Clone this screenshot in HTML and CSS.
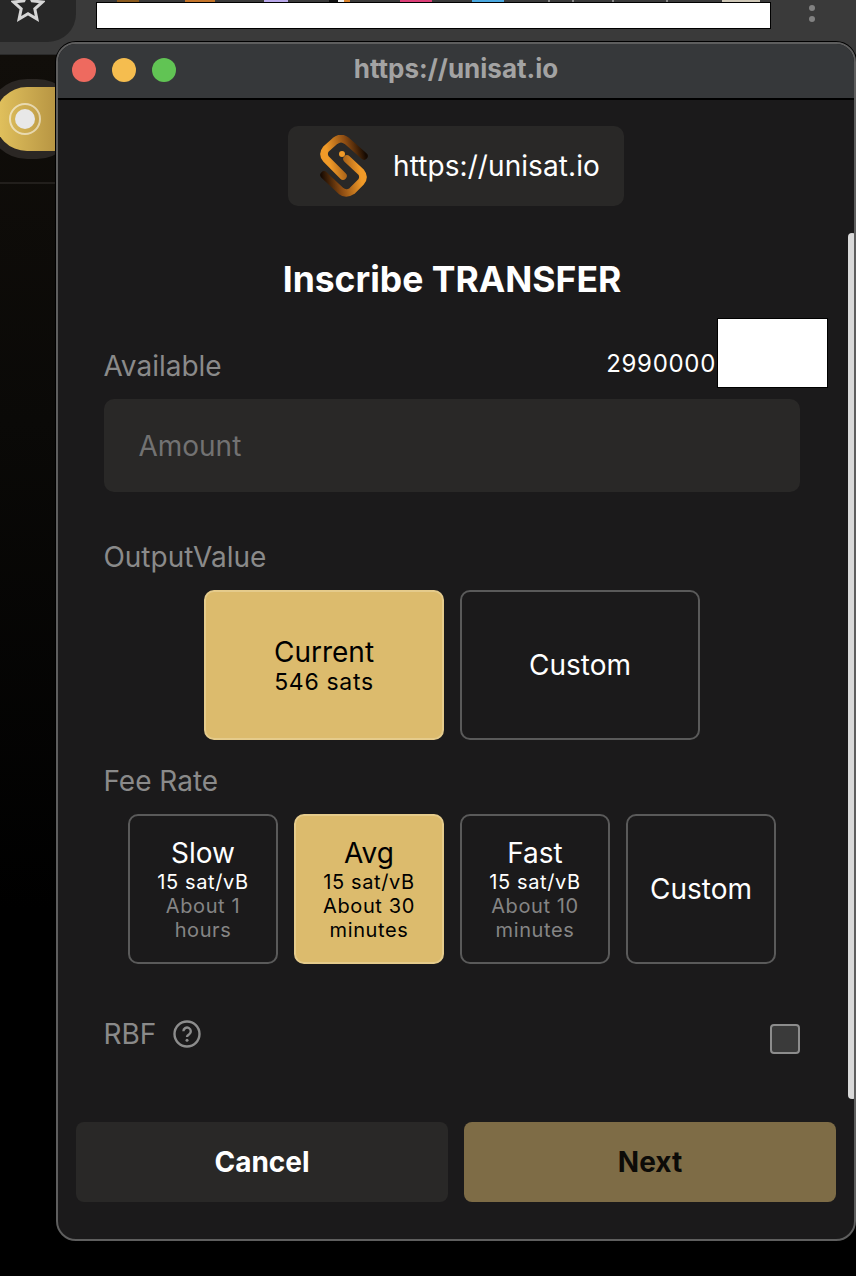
FILE: index.html
```html
<!DOCTYPE html>
<html lang="en">
<head>
<meta charset="utf-8">
<title>Inscribe TRANSFER</title>
<link rel="stylesheet" href="styles.css">
</head>
<body>
<div class="desktop">
  <div class="toolbar">
    <div class="star-pill">
      <svg class="star" width="34" height="34" viewBox="0 0 34 34"><path d="M17 2.5l4.2 9.4 10.2 1.1-7.6 6.9 2.1 10.1-8.9-5.2-8.9 5.2 2.1-10.1-7.6-6.9 10.2-1.1z" fill="none" stroke="#d6d6d6" stroke-width="3" stroke-linejoin="miter"/></svg>
    </div>
    <div class="thumbs">
      <span class="thumb t1"></span><span class="thumb t2"></span><span class="thumb t3"></span><span class="thumb t4"></span><span class="thumb t5"></span><span class="thumb t6"></span><span class="thumb t7a"></span><span class="thumb t7b"></span><span class="thumb t7c"></span><span class="thumb t7d"></span><span class="thumb t8"></span>
    </div>
    <div class="redact-bar"></div>
    <div class="kebab"><span></span><span></span></div>
  </div>
  <div class="behind">
    <div class="toggle"><div class="toggle-gold"><div class="toggle-ring"><div class="toggle-dot"></div></div></div></div>
    <div class="behind-line"></div>
  </div>

  <div class="window">
    <div class="titlebar">
      <div class="lights"><span class="light red"></span><span class="light yellow"></span><span class="light green"></span></div>
      <div class="window-title">https://unisat.io</div>
    </div>
    <div class="content">
      <div class="origin">
        <svg class="logo" width="48" height="62" viewBox="0 0 48 62">
          <defs>
            <linearGradient id="la" x1="46" y1="22" x2="10" y2="30" gradientUnits="userSpaceOnUse"><stop offset="0" stop-color="#160a02"/><stop offset=".45" stop-color="#8a4a12"/><stop offset="1" stop-color="#f09a28"/></linearGradient>
            <linearGradient id="lb" x1="1" y1="40" x2="40" y2="34" gradientUnits="userSpaceOnUse"><stop offset="0" stop-color="#160a02"/><stop offset=".45" stop-color="#8a4a12"/><stop offset="1" stop-color="#f09a28"/></linearGradient>
          </defs>
          <path d="M44 21 L27 6 Q21 1 15 6 L6 14 Q2 19 6 24 L23 41" fill="none" stroke="url(#la)" stroke-width="7.5" stroke-linecap="round"/>
          <path d="M4 40 L21 56 Q26 60 32 56 L41 47 Q45 42 41 37 L27 24" fill="none" stroke="url(#lb)" stroke-width="7.5" stroke-linecap="round"/>
          <circle cx="22" cy="19" r="3" fill="#f09a28"/>
        </svg>
        <span class="origin-text">https://unisat.io</span>
      </div>
      <h1 class="heading">Inscribe TRANSFER</h1>
      <div class="available-row">
        <span class="label">Available</span>
        <div class="balance"><span class="balance-num">2990000</span><div class="redact-box"></div></div>
      </div>
      <div class="amount-input">Amount</div>
      <div class="label output-label">OutputValue</div>
      <div class="output-row">
        <div class="card card-wide selected"><div class="card-title">Current</div><div class="card-sub">546 sats</div></div>
        <div class="card card-wide"><div class="card-title">Custom</div></div>
      </div>
      <div class="label fee-label">Fee Rate</div>
      <div class="fee-row">
        <div class="card card-fee"><div class="card-title">Slow</div><div class="card-sub">15 sat/vB</div><div class="card-note">About 1 hours</div></div>
        <div class="card card-fee selected"><div class="card-title">Avg</div><div class="card-sub">15 sat/vB</div><div class="card-note">About 30 minutes</div></div>
        <div class="card card-fee"><div class="card-title">Fast</div><div class="card-sub">15 sat/vB</div><div class="card-note">About 10 minutes</div></div>
        <div class="card card-fee"><div class="card-title">Custom</div></div>
      </div>
      <div class="rbf-row">
        <div class="rbf-left">
          <span class="label">RBF</span>
          <svg class="help" width="28" height="28" viewBox="0 0 28 28"><circle cx="14" cy="14" r="12.5" fill="none" stroke="#8c8c8c" stroke-width="2.4"/><path d="M10.4 11.3a3.7 3.7 0 1 1 5.8 3c-1.4.9-2.2 1.5-2.2 2.8" fill="none" stroke="#8c8c8c" stroke-width="2.4"/><circle cx="14" cy="20.3" r="1.5" fill="#8c8c8c"/></svg>
        </div>
        <div class="checkbox"></div>
      </div>
    </div>
    <div class="footer">
      <div class="btn btn-cancel">Cancel</div>
      <div class="btn btn-next">Next</div>
    </div>
    <div class="scrollbar"></div>
  </div>
</div>
</body>
</html>
```

FILE: styles.css
```css
* { box-sizing: border-box; }
html, body { margin: 0; padding: 0; }
body { width: 856px; height: 1276px; overflow: hidden; background: #000; font-family: Inter, "Liberation Sans", sans-serif; }
.desktop { position: relative; width: 856px; height: 1276px; overflow: hidden; background: #000; }

.toolbar { position: relative; height: 55px; background: #3a3a3a; border-bottom: 1px solid #2a2a2a; }
.star-pill { position: absolute; left: 0; top: 0; width: 76px; height: 42px; background: #272727; border-radius: 0 0 28px 0; }
.star { position: absolute; left: 11px; top: -11px; }
.thumbs { position: absolute; left: 96px; top: 0; width: 675px; height: 3px; }
.thumb { position: absolute; top: 0; height: 3px; }
.t1 { left: 21px; width: 22px; background: #8a5a1e; }
.t2 { left: 89px; width: 30px; background: #c4742a; }
.t3 { left: 168px; width: 24px; background: #b9a8ea; }
.t4 { left: 233px; width: 21px; background: linear-gradient(90deg, #111 45%, #eee 45%, #eee 70%, #d9822b 70%); }
.t5 { left: 304px; width: 32px; background: #dd3f78; }
.t6 { left: 376px; width: 32px; background: #4aa8e0; }
.t7a { left: 452px; width: 2px; background: #8a8a8a; }
.t7b { left: 476px; width: 2px; background: #8a8a8a; }
.t7c { left: 516px; width: 2px; background: #8a8a8a; }
.t7d { left: 570px; width: 2px; background: #8a8a8a; }
.t8 { left: 626px; width: 38px; background: #cfc8b8; }
.redact-bar { position: absolute; left: 96px; top: 2px; width: 675px; height: 27px; background: #fff; border: 1px solid #000; }
.kebab { position: absolute; left: 809px; top: 5px; display: flex; flex-direction: column; gap: 5px; }
.kebab span { display: block; width: 6px; height: 6px; border-radius: 50%; background: #828282; }

.behind { position: absolute; left: 0; top: 55px; width: 60px; height: 1221px; background: linear-gradient(180deg, #110e0a 0, #0a0907 30%, #000 70%); }
.toggle { position: absolute; left: -13px; top: 24px; width: 90px; height: 80px; border-radius: 40px; background: #2b2724; padding: 8px 0 8px 8px; }
.toggle-gold { width: 82px; height: 64px; border-radius: 32px 0 0 32px; background: linear-gradient(90deg, #e3c35e, #a8853a); display: flex; align-items: center; padding-left: 14px; }
.toggle-ring { width: 32px; height: 32px; border-radius: 50%; border: 2px solid rgba(255,255,255,.55); display: flex; align-items: center; justify-content: center; }
.toggle-dot { width: 20px; height: 20px; border-radius: 50%; background: #e8e8e8; }
.behind-line { position: absolute; left: 0; top: 127px; width: 60px; height: 2px; background: #221f1c; }

.window { position: absolute; left: 56px; top: 42px; width: 800px; height: 1199px; border-radius: 20px; background: #1b1a1b; border: 2px solid #5e5e5e; box-shadow: 0 0 0 1px #000; overflow: hidden; display: flex; flex-direction: column; }
.titlebar { position: relative; flex: none; height: 56px; padding-bottom: 5px; background: #36383a; border-bottom: 2px solid #000; display: flex; align-items: center; justify-content: center; }
.lights { position: absolute; left: 14px; top: 14px; display: flex; gap: 16px; }
.light { display: block; width: 24px; height: 24px; border-radius: 50%; }
.red { background: #ee6a5f; }
.yellow { background: #f5bd4f; }
.green { background: #61c454; }
.window-title { font-size: 26px; font-weight: 700; color: #a3a3a3; }

.content { flex: none; height: 1022px; padding: 26px 54px 0 46px; display: flex; flex-direction: column; }
.origin { align-self: center; width: 336px; height: 80px; border-radius: 10px; background: #292827; display: flex; align-items: center; padding-left: 32px; gap: 25px; margin-left: 8px; flex: none; }
.logo { flex: none; }
.origin-text { font-size: 28px; letter-spacing: .08px; color: #fff; white-space: nowrap; }
.heading { margin: 53px 0 0; font-size: 35.5px; line-height: 42px; font-weight: 700; color: #fff; text-align: center; white-space: nowrap; }

.label { font-size: 28px; line-height: 36px; color: #8a8a8a; margin-left: -.6px; }
.available-row { display: flex; justify-content: space-between; align-items: flex-start; height: 70px; margin-top: 17px; margin-right: -28px; }
.available-row .label { margin-top: 30px; }
.balance { display: flex; align-items: flex-start; }
.balance-num { font-size: 24px; line-height: 30px; letter-spacing: .7px; color: #fff; margin-top: 31px; margin-right: 1px; }
.redact-box { width: 111px; height: 70px; background: #fff; border: 1px solid #000; }

.amount-input { height: 93px; margin-top: 11px; border-radius: 10px; background: #292827; padding-left: 34.4px; display: flex; align-items: center; font-size: 28px; color: #727272; flex: none; }
.output-label { margin-top: 47px; }
.output-row { display: flex; justify-content: center; gap: 16px; margin-top: 15px; }
.card { border: 2px solid #5a5a5a; border-radius: 10px; color: #fff; display: flex; flex-direction: column; align-items: center; justify-content: center; text-align: center; flex: none; }
.card.selected { background: #dcbb6d; border-color: #e5cb8b; color: #000; }
.card-wide { width: 240px; height: 150px; }
.card-fee { width: 150px; height: 150px; }
.card-title { font-size: 28px; line-height: 34px; }
.card-wide .card-sub { font-size: 23px; line-height: 27px; letter-spacing: .7px; }
.card-fee .card-sub { font-size: 20px; line-height: 24px; letter-spacing: .6px; }
.card-note { font-size: 20px; line-height: 24px; letter-spacing: .6px; color: #858585; width: 110px; }
.selected .card-note { color: #000; }
.fee-label { margin-top: 23px; }
.fee-row { display: flex; justify-content: center; gap: 16px; margin-top: 15px; }
.rbf-row { display: flex; justify-content: space-between; align-items: flex-start; margin-top: 52px; }
.rbf-left { display: flex; align-items: center; gap: 16.6px; }
.help { display: block; }
.checkbox { width: 30px; height: 30px; margin-top: 8px; background: #3a3a3a; border: 2px solid #8c8c8c; border-radius: 4px; }

.footer { flex: none; display: flex; gap: 16px; padding: 0 18px; }
.btn { flex: 1; height: 80px; border-radius: 8px; display: flex; align-items: center; justify-content: center; font-size: 28px; font-weight: 700; }
.btn-cancel { background: #292827; color: #fff; }
.btn-next { background: #7e6c46; color: #0c0b08; }
.scrollbar { position: absolute; right: -2px; top: 189px; width: 8px; height: 866px; border-radius: 4px; background: #d9d9d9; }
```
